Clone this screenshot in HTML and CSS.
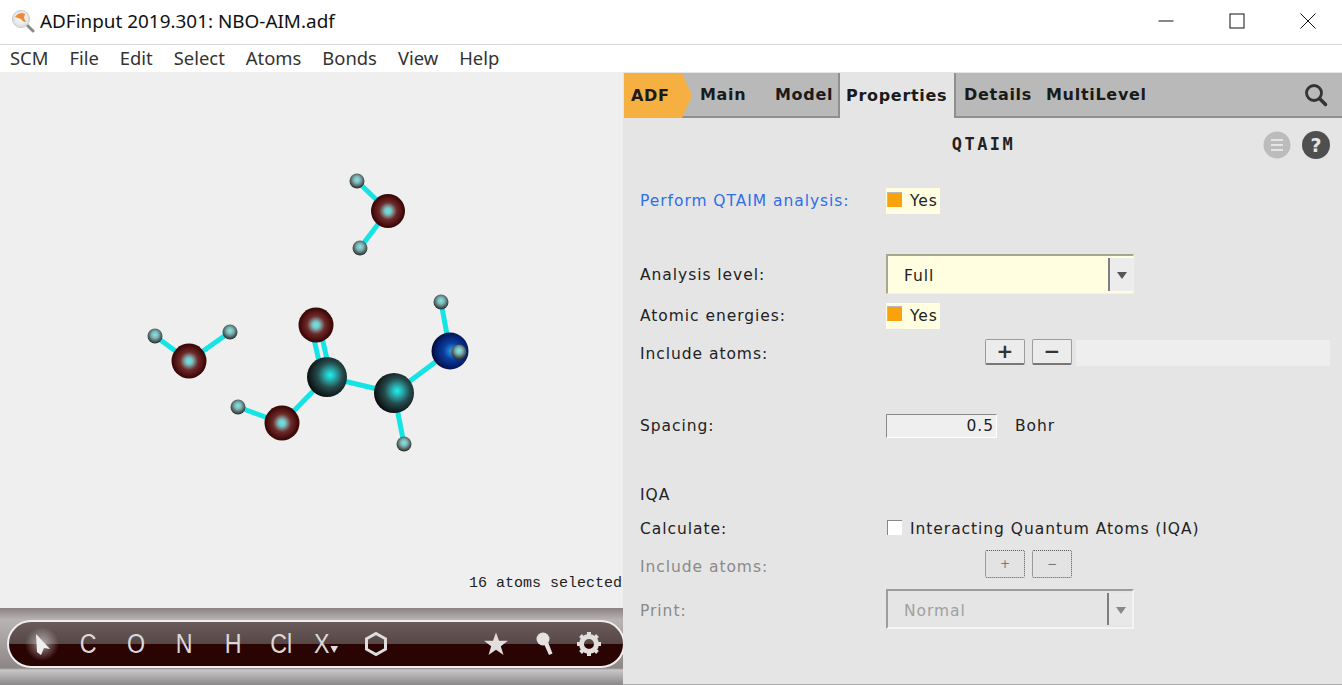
FILE: index.html
```html
<!DOCTYPE html>
<html lang="en">
<head>
<meta charset="utf-8">
<title>ADFinput</title>
<link rel="stylesheet" href="styles.css">
</head>
<body>
<header class="titlebar">
  <svg class="appicon" width="24" height="24" viewBox="0 0 24 24">
    <defs><radialGradient id="lens" cx="50%" cy="45%" r="55%"><stop offset="0" stop-color="#fff"/><stop offset="1" stop-color="#ddd"/></radialGradient></defs>
    <path d="M15 15l7 7" stroke="#8a8a8a" stroke-width="3" stroke-linecap="round"/>
    <circle cx="10" cy="10" r="8.5" fill="url(#lens)" stroke="#c9c9c9"/>
    <path d="M4 8c3-4 7-5 10-3l-1 4 2 4c-2 0-4-1-5-3z" fill="#ee8a33"/>
  </svg>
  <span class="title">ADFinput 2019.301: NBO-AIM.adf</span>
  <div class="winctl">
    <svg width="16" height="16" viewBox="0 0 16 16"><path d="M0.5 8h15" stroke="#111"/></svg>
    <svg width="16" height="16" viewBox="0 0 16 16"><rect x="1" y="1" width="14" height="14" fill="none" stroke="#111"/></svg>
    <svg width="16" height="16" viewBox="0 0 16 16"><path d="M0.5 0.5l15 15M15.5 0.5l-15 15" stroke="#111"/></svg>
  </div>
</header>
<nav class="menubar">
  <span>SCM</span><span>File</span><span>Edit</span><span>Select</span><span>Atoms</span><span>Bonds</span><span>View</span><span>Help</span>
</nav>
<main class="workspace">
  <section class="viewer">
    <div class="canvas">
      <svg class="molecule" width="623" height="536" viewBox="0 72 623 536">
        <defs>
          <radialGradient id="o" cx="50%" cy="50%" r="52%"><stop offset="0" stop-color="#55f0f0"/><stop offset=".18" stop-color="#7fc4c4"/><stop offset=".5" stop-color="#6e2a2a"/><stop offset=".88" stop-color="#420808"/><stop offset="1" stop-color="#2a0808"/></radialGradient>
          <radialGradient id="c" cx="58%" cy="45%" r="58%"><stop offset="0" stop-color="#10f8f8"/><stop offset=".2" stop-color="#2ab5b5"/><stop offset=".55" stop-color="#264a4c"/><stop offset="1" stop-color="#0a0d0e"/></radialGradient>
          <radialGradient id="h" cx="50%" cy="42%" r="55%"><stop offset="0" stop-color="#6ff0f0"/><stop offset=".4" stop-color="#84b4b4"/><stop offset="1" stop-color="#2e3333"/></radialGradient>
          <radialGradient id="n" cx="55%" cy="50%" r="55%"><stop offset="0" stop-color="#2f9fe0"/><stop offset=".4" stop-color="#0a3fa0"/><stop offset=".85" stop-color="#04185e"/><stop offset="1" stop-color="#02082a"/></radialGradient>
        </defs>
        <g class="bonds">
          <path d="M357 181L388 211M388 211L360 248"/>
          <path d="M155 336L189 361M189 361L230 332"/>
          <path d="M313 335L321 370M321 333L329 368"/>
          <path d="M327 377L394 393M394 393L450 351M450 351L441 302M394 393L404 444M327 377L282 423M282 423L238 407"/>
        </g>
        <circle cx="357" cy="181" r="7.5" fill="url(#h)"/>
        <circle cx="388" cy="211" r="17" fill="url(#o)"/>
        <circle cx="360" cy="248" r="7.5" fill="url(#h)"/>
        <circle cx="155" cy="336" r="7.5" fill="url(#h)"/>
        <circle cx="189" cy="361" r="17.5" fill="url(#o)"/>
        <circle cx="230" cy="332" r="7.5" fill="url(#h)"/>
        <circle cx="316" cy="325" r="17.5" fill="url(#o)"/>
        <circle cx="327" cy="377" r="20" fill="url(#c)"/>
        <circle cx="394" cy="393" r="20" fill="url(#c)"/>
        <circle cx="450" cy="351" r="18.5" fill="url(#n)"/>
        <circle cx="441" cy="302" r="7.5" fill="url(#h)"/>
        <circle cx="459" cy="352" r="7.5" fill="url(#h)"/>
        <circle cx="282" cy="423" r="17.5" fill="url(#o)"/>
        <circle cx="238" cy="407" r="7.5" fill="url(#h)"/>
        <circle cx="404" cy="444" r="7.5" fill="url(#h)"/>
      </svg>
      <div class="status">16 atoms selected</div>
    </div>
    <div class="dock">
      <div class="pill">
        <svg class="tool-arrow" width="36" height="36" viewBox="0 0 36 36"><defs><radialGradient id="glow"><stop offset="0" stop-color="#fff" stop-opacity=".55"/><stop offset="1" stop-color="#fff" stop-opacity="0"/></radialGradient></defs><circle cx="17" cy="18" r="17" fill="url(#glow)"/><path d="M11 8l14 15-6-1-3 7-4-3z" fill="#eee"/></svg>
        <span class="tool">C</span>
        <span class="tool">O</span>
        <span class="tool">N</span>
        <span class="tool">H</span>
        <span class="tool">Cl</span>
        <span class="tool tool-x">X<svg width="9" height="7" viewBox="0 0 9 7" class="caret"><path d="M0 0h9L4.500 7z" fill="#ddd"/></svg></span>
        <svg class="tool-hex" width="24" height="26" viewBox="0 0 24 26"><path d="M12 2.500l9.500 5.300v10.400L12 23.500l-9.500-5.300V7.800z" fill="none" stroke="#ddd" stroke-width="3"/></svg>
        <svg class="tool-star" width="26" height="26" viewBox="0 0 26 26"><path d="M13 1.500l3 8.300h9l-7.200 5.400 2.700 8.800L13 18.800 5.500 24l2.700-8.800L1 9.800h9z" fill="#e2dede"/></svg>
        <svg class="tool-pin" width="24" height="26" viewBox="0 0 24 26"><circle cx="9" cy="8" r="6.500" fill="#e6e2e2"/><path d="M10 13l5 11 3.500-1.500L14 11z" fill="#e6e2e2"/></svg>
        <svg class="tool-gear" width="26" height="26" viewBox="0 0 26 26"><circle cx="13" cy="13" r="7.500" fill="none" stroke="#e2dede" stroke-width="5"/><path d="M13 1v24M1 13h24M4.500 4.500l17 17M21.500 4.500l-17 17" stroke="#e2dede" stroke-width="4" stroke-dasharray="4 16"/></svg>
      </div>
    </div>
  </section>
  <section class="panel">
    <div class="tabs">
      <span class="tab-adf">ADF</span>
      <span class="tab tab-main">Main</span>
      <span class="tab tab-model">Model</span>
      <span class="tab tab-active">Properties</span>
      <span class="tab tab-details">Details</span>
      <span class="tab">MultiLevel</span>
      <svg class="search" width="26" height="26" viewBox="0 0 26 26"><circle cx="11" cy="11" r="7.500" fill="none" stroke="#333" stroke-width="2.800"/><path d="M16.500 16.500l6 6" stroke="#333" stroke-width="3.500" stroke-linecap="round"/></svg>
    </div>
    <div class="heading">
      <h1>QTAIM</h1>
      <div class="heading-icons">
        <svg width="28" height="28" viewBox="0 0 28 28"><circle cx="14" cy="14" r="13.500" fill="#bcbcbc"/><path d="M8 9h12M8 14h12M8 19h12" stroke="#e5e5e5" stroke-width="2"/></svg>
        <span class="help">?</span>
      </div>
    </div>
    <div class="form">
      <div class="row row-perform"><label class="lbl lbl-blue">Perform QTAIM analysis:</label><span class="check"><i class="box on"></i>Yes</span></div>
      <div class="row row-level"><label class="lbl">Analysis level:</label><div class="select sel-on"><span>Full</span><b class="arrow"></b></div></div>
      <div class="row row-energy"><label class="lbl">Atomic energies:</label><span class="check"><i class="box on"></i>Yes</span></div>
      <div class="row row-atoms"><label class="lbl">Include atoms:</label><div class="atombtns"><button class="btn">+</button><button class="btn">−</button></div><div class="atomfield"></div></div>
      <div class="row row-spacing"><label class="lbl">Spacing:</label><div class="num">0.5</div><span class="unit">Bohr</span></div>
      <div class="row row-iqa"><label class="lbl">IQA</label></div>
      <div class="row row-calc"><label class="lbl">Calculate:</label><span class="plain"><i class="box off"></i>Interacting Quantum Atoms (IQA)</span></div>
      <div class="row row-atoms2"><label class="lbl lbl-dim">Include atoms:</label><div class="atombtns"><button class="btn-dim">+</button><button class="btn-dim">−</button></div></div>
      <div class="row row-print"><label class="lbl lbl-dim">Print:</label><div class="select sel-off"><span>Normal</span><b class="arrow"></b></div></div>
    </div>
  </section>
</main>
</body>
</html>
```

FILE: styles.css
```css
* { box-sizing: border-box; }
html, body { margin: 0; padding: 0; }
body {
  width: 1342px;
  height: 685px;
  overflow: hidden;
  background: #fff;
  font-family: "DejaVu Sans", sans-serif;
  display: flex;
  flex-direction: column;
}
.titlebar {
  height: 45px;
  flex: none;
  display: flex;
  align-items: center;
  padding: 0 0 3px 11px;
  border-bottom: 1px solid #d9d9d9;
}
.appicon { margin-right: 5px; }
.title {
  font: 18.900px "Noto Sans", sans-serif;
  color: #111;
}
.winctl {
  margin-left: auto;
  margin-right: 26px;
  display: flex;
  gap: 55px;
}
.menubar {
  height: 27px;
  flex: none;
  display: flex;
  align-items: center;
  gap: 21px;
  padding: 0 0 2px 10px;
  font: 18.400px "Noto Sans", sans-serif;
  color: #333;
}
.workspace {
  flex: 1;
  display: flex;
  min-height: 0;
}
.viewer {
  width: 623px;
  flex: none;
  display: flex;
  flex-direction: column;
  background: #efefef;
}
.canvas {
  position: relative;
  height: 536px;
  flex: none;
}
.molecule { display: block; }
.bonds path { fill: none; stroke: #14e4e4; stroke-width: 5; }
.status {
  position: absolute;
  right: 1px;
  top: 503px;
  font: 15px "Liberation Mono", monospace;
  color: #222;
}
.dock {
  flex: 1;
  overflow: hidden;
  padding: 12px 0 0 7px;
  background: linear-gradient(#8b8282, #b9b4b4 12px, #8d8686 60px, #c9c6c6 62px, #8a8888 77px);
}
.pill {
  width: 618px;
  height: 48px;
  border: 2.500px solid #f0eeee;
  border-radius: 24px;
  background: linear-gradient(#6a5b5b, #574646 50%, #2a0403 50%, #2a0403);
  display: flex;
  align-items: center;
  color: #dcd8d8;
  padding-left: 16px;
}
.tool {
  flex: none;
  font: 27px "Liberation Sans", sans-serif;
  width: 48.200px;
  text-align: center;
  transform: scaleX(.86);
}
.tool-arrow { flex: none; width: 36px; margin-right: 3px; }
.tool-x { display: flex; justify-content: center; align-items: flex-end; line-height: 30px; margin-left: -3px; }
.caret { margin: 0 0 6px 1px; }
.tool-hex { flex: none; margin-left: 14px; width: 24px; }
.tool-star { flex: none; margin-left: 95px; }
.tool-pin { flex: none; margin-left: 25px; }
.tool-gear { flex: none; margin-left: 18px; }

.panel {
  flex: 1;
  background: #e5e5e5;
  display: flex;
  flex-direction: column;
  border-bottom: 1px solid #aaa;
}
.tabs {
  height: 45px;
  flex: none;
  margin-top: 1px;
  margin-left: 1px;
  background: #b9b9b9;
  display: flex;
  align-items: center;
  border-bottom: 2px solid #8f8f8f;
  font: bold 16px "DejaVu Sans", sans-serif;
  letter-spacing: .7px;
  color: #1a1a1a;
  position: relative;
}
.tab-adf {
  align-self: stretch;
  width: 68px;
  margin-bottom: -2px;
  background: #f6b041;
  clip-path: polygon(0 0, 58px 0, 68px 50%, 58px 100%, 0 100%);
  display: flex;
  align-items: center;
  padding-left: 7px;
}
.tab { flex: none; }
.tab-main { margin-left: 8px; width: 75px; }
.tab-model { width: 63px; }
.tab-active {
  align-self: stretch;
  width: 118px;
  margin-bottom: -2px;
  background: #e5e5e5;
  border-left: 2px solid #8f8f8f;
  border-right: 2px solid #8f8f8f;
  padding-left: 6px;
  display: flex;
  align-items: center;
}
.tab-details { margin-left: 8px; width: 82px; }
.search { margin-left: auto; margin-right: 13px; }

.heading {
  height: 52px;
  flex: none;
  position: relative;
  display: flex;
  align-items: center;
  justify-content: center;
  padding: 0 0 1px 2px;
}
.heading h1 {
  margin: 0;
  font: bold 17px "DejaVu Sans Mono", monospace;
  letter-spacing: 2.500px;
  color: #222;
}
.heading-icons {
  position: absolute;
  right: 12px;
  top: 13px;
  display: flex;
  gap: 11px;
  align-items: center;
}
.help {
  width: 28px;
  height: 28px;
  border-radius: 50%;
  background: #4f4f4f;
  color: #e5e5e5;
  font: bold 19px "DejaVu Sans", sans-serif;
  display: flex;
  align-items: center;
  justify-content: center;
}
.form {
  padding-left: 17px;
  font-size: 15.500px;
  letter-spacing: .95px;
  color: #222;
  display: flex;
  flex-direction: column;
}
.row { display: flex; align-items: center; }
.lbl { width: 246px; flex: none; }
.lbl-blue { color: #2f6fe8; }
.lbl-dim { color: #8a8a8a; }
.check {
  background: #fffee0;
  display: flex;
  align-items: center;
  height: 26px;
  padding: 0 2px 0 1px;
  color: #222;
}
.plain { display: flex; align-items: center; }
.box { width: 15px; height: 15px; margin-right: 8px; margin-top: -4px; flex: none; }
.box.on { background: #f9a20b; border: 1px solid #b9b9b9; border-width: 1px 0 0 1px; }
.box.off { background: #fff; border-top: 1px solid #888; border-left: 1px solid #888; margin-right: 8px; margin-left: 1px; }

.row-perform { margin-top: 18px; height: 26px; }
.row-level { margin-top: 41px; height: 40px; }
.row-energy { margin-top: 2px; height: 37px; }
.row-atoms { height: 39px; padding-right: 12px; }
.row-atoms .atombtns { margin-bottom: 4px; }
.row-spacing { margin-top: 36px; height: 34px; }
.row-iqa { margin-top: 35px; height: 34px; }
.row-calc { height: 34px; }
.row-atoms2 { height: 42px; }
.row-atoms2 .atombtns { margin-bottom: 6px; }
.row-print { height: 45px; }

.select {
  width: 248px;
  height: 40px;
  display: flex;
  align-items: center;
  padding-left: 16px;
  position: relative;
  border-top: 2px solid #a7a78f;
  border-left: 2px solid #a7a78f;
}
.sel-on { background: #fffee0; border-right: 1px solid #f4f4d0; border-bottom: 1px solid #f4f4d0; margin-bottom: 2px; padding-top: 2px; }
.sel-off { border-color: #9c9c9c; border-right: 2px solid #f4f4f4; border-bottom: 2px solid #f4f4f4; color: #a0a0a0; margin-bottom: 4px; padding-top: 4px; }
.arrow {
  position: absolute;
  right: 0;
  top: 2px;
  bottom: 2px;
  width: 25px;
  border-left: 2px solid #7e7e7e;
  background: #ececec;
}
.sel-off .arrow { background: #e8e8e8; }
.arrow::after {
  content: "";
  position: absolute;
  left: 7px;
  top: 14px;
  border-style: solid;
  border-width: 7px 5px 0;
  border-color: #555 transparent transparent;
}
.sel-off .arrow::after { border-top-color: #888; }
.atombtns { display: flex; gap: 7px; margin-left: 99px; }
.btn {
  width: 40px;
  height: 26px;
  padding: 0;
  background: #ececec;
  border: 1px solid #9c9c9c;
  border-bottom: 2px solid #777;
  border-radius: 2px;
  font: bold 20px/20px "DejaVu Sans", sans-serif;
  color: #333;
}
.atomfield { flex: 1; height: 26px; margin: 0 0 2px 4px; background: #eeeeee; }
.btn-dim {
  width: 40px;
  height: 28px;
  padding: 0;
  background: #e3e3e3;
  border: 1px dotted #555;
  border-radius: 2px;
  font: 12px/12px "DejaVu Sans", sans-serif;
  color: #777;
}
.num {
  width: 111px;
  height: 24px;
  flex: none;
  background: #efefef;
  border-top: 1px solid #8a8a8a;
  border-left: 1px solid #8a8a8a;
  border-bottom: 1px solid #fff;
  border-right: 1px solid #fff;
  text-align: right;
  padding-right: 2px;
  line-height: 22px;
}
.unit { margin-left: 18px; }
```
